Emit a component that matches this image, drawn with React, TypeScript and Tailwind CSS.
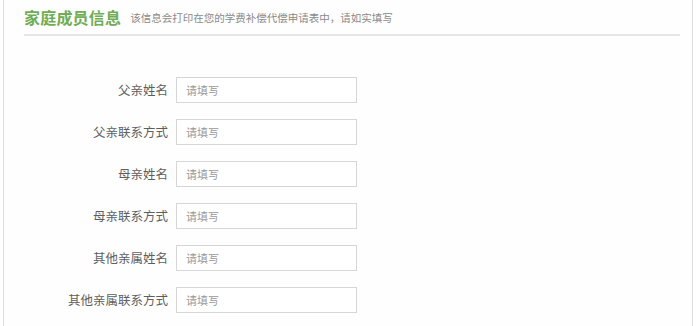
import React from "react";

const rows = ["父亲姓名", "父亲联系方式", "母亲姓名", "母亲联系方式", "其他亲属姓名", "其他亲属联系方式"];

export default function App() {
  return (
    <div
      className="w-[696px] h-[326px] bg-white overflow-hidden"
      style={{ fontFamily: '"Noto Sans CJK SC", "Noto Sans", sans-serif' }}
    >
      <div className="ml-[3px] w-[690px] h-[326px] border-l border-r border-[#dcdcdc] bg-[#fefefe]">
        <div className="ml-[20px] mr-[12px] h-[36px] border-b-2 border-[#e6e6e6] flex items-center">
          <span className="text-[16px] font-bold text-[#70ad55] leading-none tracking-[0.2px]">家庭成员信息</span>
          <span className="ml-[9px] text-[10.5px] text-[#8a8a8a] leading-none mt-[2px]">
            该信息会打印在您的学费补偿代偿申请表中，请如实填写
          </span>
        </div>
        <div className="mt-[41px] flex flex-col gap-[16px]">
          {rows.map((r) => (
            <div key={r} className="flex items-center h-[26px]">
              <div className="w-[164px] text-right text-[12.5px] text-[#5e5e5e] leading-none">{r}</div>
              <div className="ml-[8px] w-[181px] h-[26px] border border-[#d6d6d6] bg-white flex items-center pl-[9px]">
                <span className="text-[11px] text-[#9a9a9a] leading-none">请填写</span>
              </div>
            </div>
          ))}
        </div>
      </div>
    </div>
  );
}
